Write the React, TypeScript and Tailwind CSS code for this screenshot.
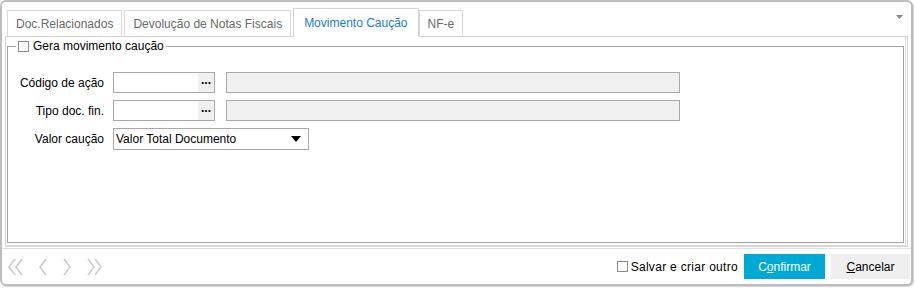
import React from "react";

const font = { fontFamily: '"Liberation Sans", Arial, sans-serif' };

const tabs = ["Doc.Relacionados", "Devolução de Notas Fiscais", "Movimento Caução", "NF-e"];

function Checkbox() {
  return <span className="inline-block h-[11px] w-[11px] border border-[#8c8c8c] bg-white" />;
}

function LookupField() {
  return (
    <div className="flex h-[21px] w-[102px] border border-[#a9a9a9] bg-white">
      <div className="flex-1" />
      <div className="flex w-[16px] items-center justify-center bg-[#f0f0f0] text-[12px] font-bold leading-none text-black">
        <span className="-mt-[5px]">...</span>
      </div>
    </div>
  );
}

function Chevron({ dir, double }: { dir: "l" | "r"; double?: boolean }) {
  const one = dir === "l" ? "M8 1 L2 9 L8 17" : "M2 1 L8 9 L2 17";
  const two = dir === "l" ? "M15 1 L9 9 L15 17" : "M9 1 L15 9 L9 17";
  return (
    <svg width={double ? 17 : 10} height={18} viewBox={`0 0 ${double ? 17 : 10} 18`} fill="none">
      <path d={one} stroke="#cbcbcb" strokeWidth="1.6" />
      {double && <path d={two} stroke="#cbcbcb" strokeWidth="1.6" />}
    </svg>
  );
}

export default function App() {
  return (
    <div className="h-[288px] w-[915px] bg-white text-[12px] text-black" style={font}>
      <div className="flex h-[286px] w-[913px] flex-col rounded-[6px] border-2 border-[#bdbdbd] bg-white shadow-[1px_1px_0_#d6d6d6]">
        {/* tab strip */}
        <div className="relative flex h-[34px] items-end pl-[5px]">
          {tabs.map((t, i) => {
            const active = i === 2;
            return (
              <div
                key={t}
                className={
                  active
                    ? "z-10 -mb-px flex h-[29px] items-center border border-b-white border-[#d4d4d4] bg-white px-[10px] text-[#1a7dd6]"
                    : "mr-[2px] flex h-[26px] items-center border border-b-0 border-[#d9d9d9] bg-white px-[8px] text-[#6b6b6b]"
                }
              >
                {t}
              </div>
            );
          })}
          <svg className="absolute right-[8px] top-[13px]" width="7" height="4" viewBox="0 0 7 4">
            <path d="M0 0 H7 L3.5 4 Z" fill="#8a8a8a" />
          </svg>
        </div>

        {/* panel */}
        <div className="ml-[3px] mr-[3px] h-[211px] border border-[#d4d4d4] pl-px pr-px">
          <div className="h-full border-r border-b border-[#d9d9d9] pr-px pb-px">
            <fieldset className="h-[206px] border border-[#a3a3a3] pt-[15px]">
              <legend className="ml-[8px] flex items-center gap-[4px] px-[2px]">
                <Checkbox />
                <span>Gera movimento caução</span>
              </legend>
              <div className="mt-[2px] grid grid-cols-[96px_auto_1fr] items-center gap-x-[9px] gap-y-[7px]">
                <span className="text-right">Código de ação</span>
                <LookupField />
                <div className="ml-[2px] h-[21px] w-[454px] border border-[#a9a9a9] bg-[#f0f0f0]" />
                <span className="text-right">Tipo doc. fin.</span>
                <LookupField />
                <div className="ml-[2px] h-[21px] w-[454px] border border-[#a9a9a9] bg-[#f0f0f0]" />
                <span className="text-right">Valor caução</span>
                <div className="col-span-2 flex h-[22px] w-[196px] items-center border border-[#a9a9a9] bg-white pl-[2px] pr-[7px]">
                  <span className="flex-1">Valor Total Documento</span>
                  <svg width="10" height="6" viewBox="0 0 10 6">
                    <path d="M0 0 H10 L5 6 Z" fill="#000" />
                  </svg>
                </div>
              </div>
            </fieldset>
          </div>
        </div>

        {/* footer */}
        <div className="mt-px flex flex-1 items-center border-t border-[#e0e0e0] pl-[5px] pr-[1px]">
          <div className="flex items-center gap-[14px]">
            <Chevron dir="l" double />
            <Chevron dir="l" />
            <Chevron dir="r" />
            <Chevron dir="r" double />
          </div>
          <div className="ml-auto flex items-center">
            <Checkbox />
            <span className="ml-[3px] mr-[6px] tracking-[0.3px]">Salvar e criar outro</span>
            <button className="h-[25px] w-[81px] bg-[#00a9d4] text-white">
              C<span className="underline">o</span>nfirmar
            </button>
            <button className="ml-[6px] h-[25px] w-[79px] bg-[#efefef] text-black">
              <span className="underline">C</span>ancelar
            </button>
          </div>
        </div>
      </div>
    </div>
  );
}
